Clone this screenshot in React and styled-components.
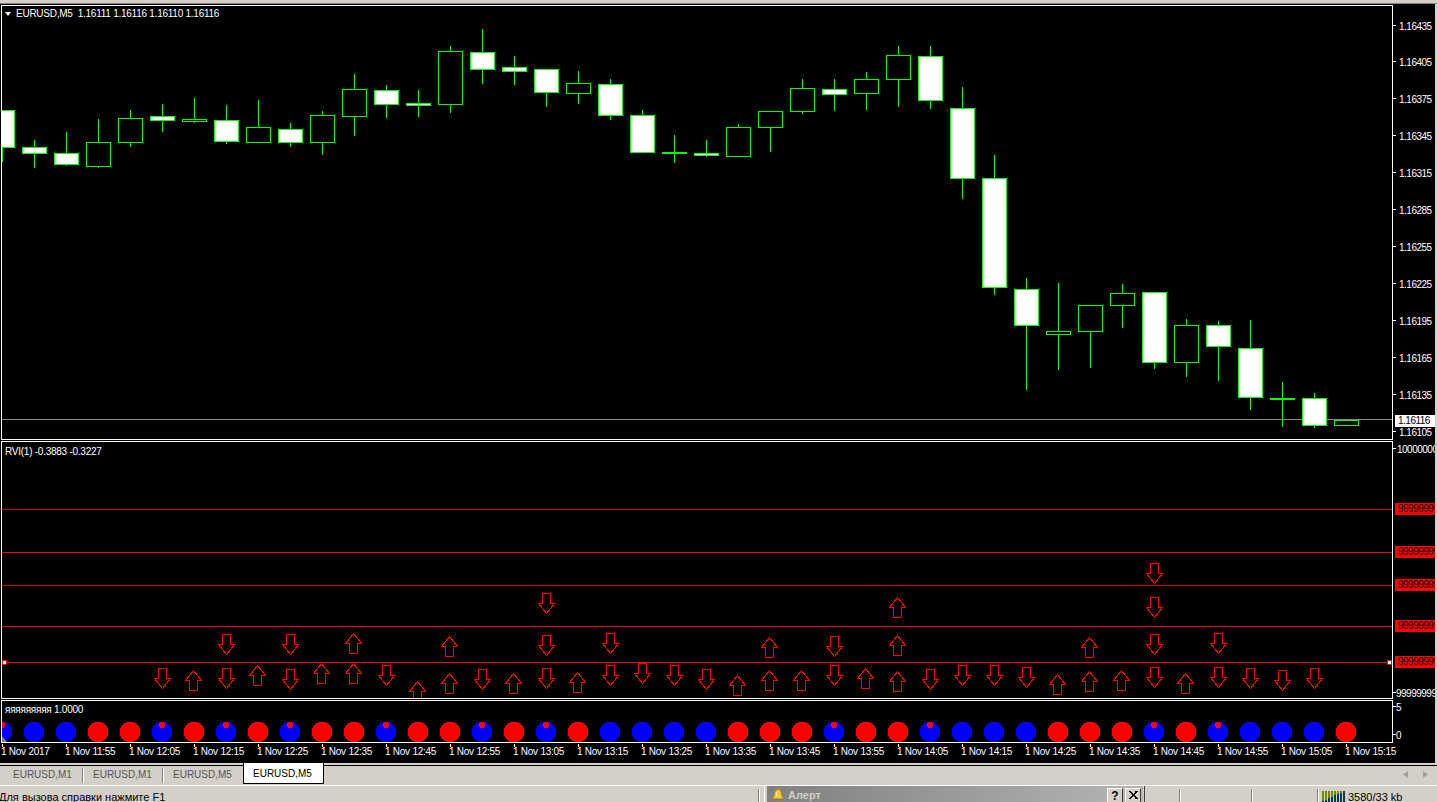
import React from "react";
import styled, { createGlobalStyle } from "styled-components";

const GlobalStyle = createGlobalStyle`
  html, body {
    margin: 0;
    padding: 0;
    height: 100%;
    overflow: hidden;
    background: #d4d0c8;
  }
`;

const Window = styled.div`
  display: flex;
  flex-direction: column;
  width: 1437px;
  height: 802px;
  overflow: hidden;
  font-family: "Liberation Sans", Arial, sans-serif;
  background: #d4d0c8;
`;

const TopStrip = styled.div`
  flex: none;
  height: 3px;
  border-bottom: 1px solid #808080;
  background: #d4d0c8;
`;

const Charts = styled.div`
  flex: none;
  width: 1435px;
  height: 759px;
  padding-top: 1px;
  box-sizing: border-box;
  background: #000;
  color: #fff;
`;

const Panel = styled.div`
  display: flex;
  height: ${(p) => p.$height}px;
  margin-bottom: 1px;
  padding-left: 1px;
`;

const Plot = styled.div`
  position: relative;
  flex: none;
  width: 1390px;
  border: 1px solid #fff;
  overflow: hidden;

  svg {
    display: block;
  }
`;

const PanelLabel = styled.div`
  position: absolute;
  left: 3px;
  top: ${(p) => p.$top}px;
  display: flex;
  align-items: center;
  gap: 5px;
  font-size: 10px;
  letter-spacing: -0.25px;
  line-height: 12px;
  white-space: pre;
`;

const MenuMark = styled.span`
  width: 0;
  height: 0;
  border-left: 3px solid transparent;
  border-right: 3px solid transparent;
  border-top: 4px solid #fff;
`;

const Axis = styled.div`
  position: relative;
  flex: 1;
  overflow: hidden;
`;

const Tick = styled.span`
  position: absolute;
  left: ${(p) => p.$left}px;
  height: 12px;
  font-size: 10px;
  line-height: 12px;
  letter-spacing: -0.5px;
  white-space: nowrap;

  &::before {
    content: "";
    position: absolute;
    left: ${(p) => -p.$left}px;
    top: 4px;
    width: 3px;
    height: 1px;
    background: #fff;
  }
`;

const Flag = styled.span`
  position: absolute;
  left: 2px;
  width: 37px;
  height: 12px;
  padding-left: 3px;
  overflow: hidden;
  font-size: 10px;
  line-height: 12px;
  letter-spacing: -0.5px;
  white-space: nowrap;
  color: #000;
  background: ${(p) => (p.$red ? "#ff0000" : "#fff")};
`;

const TimeAxis = styled.div`
  display: flex;
  padding-left: 2px;
  height: 20px;
`;

const TimeCell = styled.div`
  position: relative;
  flex: none;
  width: 64px;
  font-size: 10px;
  letter-spacing: -0.25px;
  line-height: 12px;
  white-space: nowrap;

  &::before {
    content: "";
    position: absolute;
    left: 0;
    top: 0;
    width: 1px;
    height: 3px;
    background: #fff;
  }

  span {
    position: absolute;
    left: -1px;
    top: 2px;
  }
`;

const TabBar = styled.div`
  flex: none;
  display: flex;
  height: 20px;
  border-top: 2px solid #d4d0c8;
`;

const TabStrip = styled.div`
  display: flex;
  flex: 1;
  padding-left: 3px;
  border-top: 1px solid #000;
`;

const Tab = styled.div`
  flex: none;
  box-sizing: border-box;
  width: ${(p) => (p.$active ? 81 : 80)}px;
  padding-left: ${(p) => (p.$active ? 9 : 10)}px;
  font-size: 10px;
  line-height: 18px;
  color: ${(p) => (p.$active ? "#000" : "#555")};
  ${(p) =>
    p.$active
      ? `
    margin-top: -3px;
    height: 21px;
    padding-top: 2px;
    background: #fff;
    border: 1px solid #000;
    border-top: 0;
  `
      : p.$sep
      ? `
    height: 15px;
    margin-top: 2px;
    line-height: 14px;
    border-right: 1px solid #808080;
    box-shadow: 1px 0 0 #fff;
  `
      : `
    height: 15px;
    margin-top: 2px;
    line-height: 14px;
  `}
`;

const ScrollArrows = styled.div`
  display: flex;
  align-items: center;
  gap: 15px;
  margin-left: auto;
  padding: 0 9px 3px 0;
`;

const StatusBar = styled.div`
  position: relative;
  flex: none;
  display: flex;
  height: 17px;
  border-top: 1px solid #fff;
  font-size: 11px;
  color: #000;
  overflow: hidden;
`;

const StatusCell = styled.div`
  flex: none;
  box-sizing: border-box;
  display: flex;
  gap: 2px;
  width: ${(p) => p.$width}px;
  height: 14px;
  margin-top: 3px;
  padding-left: 4px;
  line-height: 16px;
  white-space: nowrap;
  border-left: 1px solid #808080;
  box-shadow: inset 1px 0 0 #fff;

  &:first-child {
    padding-left: 0;
    margin-left: -1px;
    border-left: 0;
    box-shadow: none;
    width: ${(p) => p.$width + 1}px;
  }
`;

const AlertWindow = styled.div`
  position: absolute;
  left: 764px;
  top: -3px;
  box-sizing: border-box;
  width: 381px;
  height: 22px;
  padding: 2px 1px 0 2px;
  background: #d4d0c8;
  border-top: 1px solid #fff;
  border-left: 1px solid #fff;
  border-right: 1px solid #404040;
`;

const AlertTitle = styled.div`
  display: flex;
  align-items: flex-start;
  gap: 4px;
  height: 19px;
  padding: 2px 2px 0 5px;
  box-sizing: border-box;
  background: linear-gradient(90deg, #808080, #b5b5b5);
  color: #d4d0c8;
  font-size: 11px;
  font-weight: bold;
  line-height: 14px;
`;

const AlertName = styled.span`
  flex: 1;
`;

const CaptionButton = styled.span`
  flex: none;
  box-sizing: border-box;
  display: flex;
  justify-content: center;
  width: 16px;
  height: 15px;
  margin-left: -2px;
  padding-top: 2px;
  color: #000;
  background: #d4d0c8;
  font-size: 12px;
  line-height: 11px;
  border: 1px solid;
  border-color: #fff #404040 #404040 #fff;
`;

const WHITE = true;
const candles = [
  [2, 110, 147, 110, 162, WHITE],
  [34, 147, 153, 140, 168, WHITE],
  [66, 153, 164, 132, 166, WHITE],
  [98, 142, 166, 119, 168],
  [130, 118, 142, 110, 147],
  [162, 116, 120, 104, 132, WHITE],
  [194, 119, 121, 98, 123],
  [226, 120, 141, 105, 144, WHITE],
  [258, 127, 142, 100, 142],
  [290, 129, 142, 123, 147, WHITE],
  [322, 115, 142, 111, 155],
  [354, 89, 116, 74, 136],
  [386, 90, 104, 85, 118, WHITE],
  [418, 103, 105, 90, 117, WHITE],
  [450, 51, 104, 46, 113],
  [482, 52, 69, 29, 84, WHITE],
  [514, 67, 71, 56, 85, WHITE],
  [546, 69, 92, 69, 107, WHITE],
  [578, 83, 93, 71, 104],
  [610, 84, 115, 79, 120, WHITE],
  [642, 115, 152, 110, 153, WHITE],
  [674, 152, 153, 135, 163, WHITE],
  [706, 153, 155, 140, 157, WHITE],
  [738, 127, 156, 124, 157],
  [770, 111, 127, 111, 152],
  [802, 88, 111, 79, 114],
  [834, 89, 94, 79, 111, WHITE],
  [866, 79, 93, 72, 110],
  [898, 55, 79, 46, 107],
  [930, 56, 100, 46, 109, WHITE],
  [962, 108, 178, 87, 199, WHITE],
  [994, 178, 287, 155, 295, WHITE],
  [1026, 289, 325, 278, 390, WHITE],
  [1058, 331, 334, 283, 370],
  [1090, 305, 331, 305, 368],
  [1122, 293, 305, 284, 328],
  [1154, 292, 362, 292, 369, WHITE],
  [1186, 325, 362, 319, 377],
  [1218, 325, 346, 321, 381, WHITE],
  [1250, 348, 397, 320, 410, WHITE],
  [1282, 398, 399, 382, 427, WHITE],
  [1314, 398, 425, 393, 428, WHITE],
  [1346, 420, 425, 420, 426],
];

// [x, top of arrow, direction]
const arrows = [
  [162, 668, "d"], [194, 670, "u"], [226, 668, "d"], [258, 665, "u"], [290, 669, "d"],
  [322, 663, "u"], [354, 663, "u"], [386, 665, "d"], [418, 681, "u"], [450, 673, "u"],
  [482, 669, "d"], [514, 673, "u"], [546, 668, "d"], [578, 672, "u"], [610, 665, "d"],
  [642, 663, "d"], [674, 665, "d"], [706, 669, "d"], [738, 675, "u"], [770, 670, "u"],
  [802, 670, "u"], [834, 665, "d"], [866, 668, "u"], [898, 671, "u"], [930, 669, "d"],
  [962, 665, "d"], [994, 665, "d"], [1026, 667, "d"], [1058, 674, "u"], [1090, 671, "u"],
  [1122, 670, "u"], [1154, 667, "d"], [1186, 673, "u"], [1218, 667, "d"], [1250, 668, "d"],
  [1282, 670, "d"], [1314, 668, "d"],
  [226, 634, "d"], [290, 634, "d"], [354, 633, "u"], [450, 636, "u"], [546, 635, "d"],
  [610, 633, "d"], [770, 637, "u"], [834, 636, "d"], [898, 635, "u"], [1090, 637, "u"],
  [1154, 634, "d"], [1218, 633, "d"],
  [546, 593, "d"], [898, 597, "u"], [1154, 597, "d"], [1154, 563, "d"],
];

const levels = [
  [509, "#d00000"],
  [552, "#ff0000"],
  [585, "#d00000"],
  [626, "#ff0000"],
  [662, "#ff0000"],
];

// b blue, r red, x blue with a red mark
const dots = "bbbrrxrxrxrrxrrxrxrbbbbrrrxrrxbbbrrrxrxbbbr";

const prices = [
  [26, "1.16435"], [62, "1.16405"], [99, "1.16375"], [136, "1.16345"], [173, "1.16315"],
  [210, "1.16285"], [247, "1.16255"], [284, "1.16225"], [321, "1.16195"], [358, "1.16165"],
  [395, "1.16135"], [432, "1.16105"],
];

const times = [
  "1 Nov 2017", "1 Nov 11:55", "1 Nov 12:05", "1 Nov 12:15", "1 Nov 12:25", "1 Nov 12:35",
  "1 Nov 12:45", "1 Nov 12:55", "1 Nov 13:05", "1 Nov 13:15", "1 Nov 13:25", "1 Nov 13:35",
  "1 Nov 13:45", "1 Nov 13:55", "1 Nov 14:05", "1 Nov 14:15", "1 Nov 14:25", "1 Nov 14:35",
  "1 Nov 14:45", "1 Nov 14:55", "1 Nov 15:05", "1 Nov 15:15",
];

// up arrows sit one pixel left of the down ones in the reference
const arrowPath = (x, y, dir) => {
  const t = y + 0.5;
  if (dir === "d") {
    const cx = x + 0.5;
    return `M${cx - 4} ${t}H${cx + 4}V${t + 10}H${cx + 8}L${cx} ${t + 20}L${cx - 8} ${t + 10}H${cx - 4}Z`;
  }
  const cx = x - 0.5;
  return `M${cx} ${t}L${cx + 8} ${t + 10}H${cx + 4}V${t + 20}H${cx - 4}V${t + 10}H${cx - 8}Z`;
};

function MainChart() {
  return (
    <svg width="1390" height="433" viewBox="2 6 1390 433" shapeRendering="crispEdges">
      <line x1="2" x2="1392" y1="419.5" y2="419.5" stroke="#808890" />
      {candles.map(([x, top, bottom, high, low, filled]) => (
        <g key={x} stroke="#00ff00">
          <line x1={x + 0.5} x2={x + 0.5} y1={high} y2={low} />
          <rect
            x={x - 11.5}
            y={top + 0.5}
            width="24"
            height={bottom - top}
            fill={filled ? "#fff" : "#000"}
          />
        </g>
      ))}
    </svg>
  );
}

function RviChart() {
  return (
    <svg width="1390" height="256" viewBox="2 442 1390 256" shapeRendering="crispEdges">
      {levels.map(([y, color]) => (
        <line key={y} x1="2" x2="1392" y1={y + 0.5} y2={y + 0.5} stroke={color} />
      ))}
      {arrows.map(([x, y, dir], i) => (
        <path key={i} d={arrowPath(x, y, dir)} fill="none" stroke="#ff0000" />
      ))}
      <rect x="2.5" y="660.5" width="4" height="4" fill="#fff" stroke="#ff0000" />
      <rect x="1387.5" y="660.5" width="4" height="4" fill="#fff" stroke="#ff0000" />
    </svg>
  );
}

function DotsChart() {
  return (
    <svg width="1390" height="41" viewBox="2 701 1390 41">
      {dots.split("").map((kind, i) => {
        const cx = 2 + i * 32;
        return (
          <g key={i} shapeRendering="crispEdges">
            <circle cx={cx} cy="732" r="10.5" fill={kind === "r" ? "#ff0000" : "#0000ff"} />
            {(kind === "x" || i === 0) && <circle cx={cx} cy="725" r="3.2" fill="#ff0000" />}
          </g>
        );
      })}
      <polygon points="2,736 7,742 2,742" fill="#808080" />
    </svg>
  );
}

function BellIcon() {
  return (
    <svg width="12" height="13" viewBox="0 0 12 13" style={{ flex: "none" }}>
      <path
        d="M6 .8c.8 0 1.2.5 1.3 1.2C9 2.6 9.5 4 9.7 6c.2 1.9.7 3 1.8 4v1H.5v-1C1.600 9 2.100 7.900 2.300 6 2.500 4 3 2.600 4.700 2 4.800 1.300 5.200.8 6 .8z"
        fill="#f4c83c"
        stroke="#97700c"
        strokeWidth="0.8"
      />
      <path d="M4.600 11.500h2.800L6 12.800z" fill="#97700c" />
      <path d="M4.500 4v4" stroke="#fff3b8" strokeWidth="1" />
    </svg>
  );
}

function ConnectionIcon() {
  const bars = Array.from({ length: 8 }, (_, i) => i);
  return (
    <svg width="24" height="11" viewBox="0 0 24 11" shapeRendering="crispEdges" style={{ marginTop: 2, flex: "none" }}>
      {bars.map((i) => (
        <g key={i}>
          <rect x={i * 3} y="0" width="2" height="11" fill="#6c8c00" />
          <rect x={i * 3} y={10 - i * 1.4} width="2" height={1 + i * 1.4} fill="#003a66" />
        </g>
      ))}
    </svg>
  );
}

function CloseGlyph() {
  return (
    <svg width="9" height="8" viewBox="0 0 9 8" shapeRendering="crispEdges">
      <path d="M1 0l7 8M8 0L1 8" stroke="#000" strokeWidth="1.6" fill="none" />
    </svg>
  );
}

export default function App() {
  return (
    <Window>
      <GlobalStyle />
      <TopStrip />
      <Charts>
        <Panel $height={435}>
          <Plot>
            <MainChart />
            <PanelLabel $top={2}>
              <MenuMark />
              {"EURUSD,M5  1.16111 1.16116 1.16110 1.16116"}
            </PanelLabel>
          </Plot>
          <Axis>
            {prices.map(([y, text]) => (
              <Tick key={text} $left={6} style={{ top: y - 10 }}>
                {text}
              </Tick>
            ))}
            <Flag style={{ top: 410 }}>1.16116</Flag>
          </Axis>
        </Panel>

        <Panel $height={258}>
          <Plot>
            <RviChart />
            <PanelLabel $top={4}>RVI(1) -0.3883 -0.3227</PanelLabel>
          </Plot>
          <Axis>
            <Tick $left={4} style={{ top: 3 }}>10000000</Tick>
            {[503, 546, 579, 620, 656].map((y) => (
              <Flag key={y} $red style={{ top: y - 441 }}>
                999999999
              </Flag>
            ))}
            <Tick $left={3} style={{ top: 247 }}>99999999</Tick>
          </Axis>
        </Panel>

        <Panel $height={43}>
          <Plot>
            <DotsChart />
            <PanelLabel $top={3}>яяяяяяяяя 1.0000</PanelLabel>
          </Plot>
          <Axis>
            <Tick $left={3} style={{ top: 2 }}>5</Tick>
            <Tick $left={3} style={{ top: 30 }}>0</Tick>
          </Axis>
        </Panel>

        <TimeAxis>
          {times.map((t) => (
            <TimeCell key={t}>
              <span>{t}</span>
            </TimeCell>
          ))}
        </TimeAxis>
      </Charts>

      <TabBar>
        <TabStrip>
          <Tab $sep>EURUSD,M1</Tab>
          <Tab $sep>EURUSD,M1</Tab>
          <Tab>EURUSD,M5</Tab>
          <Tab $active>EURUSD,M5</Tab>
          <ScrollArrows>
            <svg width="5" height="7" viewBox="0 0 5 7"><polygon points="5,0 5,7 0,3.500" fill="#a0a0a0" /></svg>
            <svg width="5" height="7" viewBox="0 0 5 7"><polygon points="0,0 0,7 5,3.500" fill="#a0a0a0" /></svg>
          </ScrollArrows>
        </TabStrip>
      </TabBar>

      <StatusBar>
        <StatusCell $width={758}>Для вызова справки нажмите F1</StatusCell>
        <StatusCell $width={421} />
        <StatusCell $width={72} />
        <StatusCell $width={66} />
        <StatusCell $width={120}>
          <ConnectionIcon />
          3580/33 kb
        </StatusCell>
        <AlertWindow>
          <AlertTitle>
            <BellIcon />
            <AlertName>Алерт</AlertName>
            <CaptionButton>?</CaptionButton>
            <CaptionButton>
              <CloseGlyph />
            </CaptionButton>
          </AlertTitle>
        </AlertWindow>
      </StatusBar>
    </Window>
  );
}
